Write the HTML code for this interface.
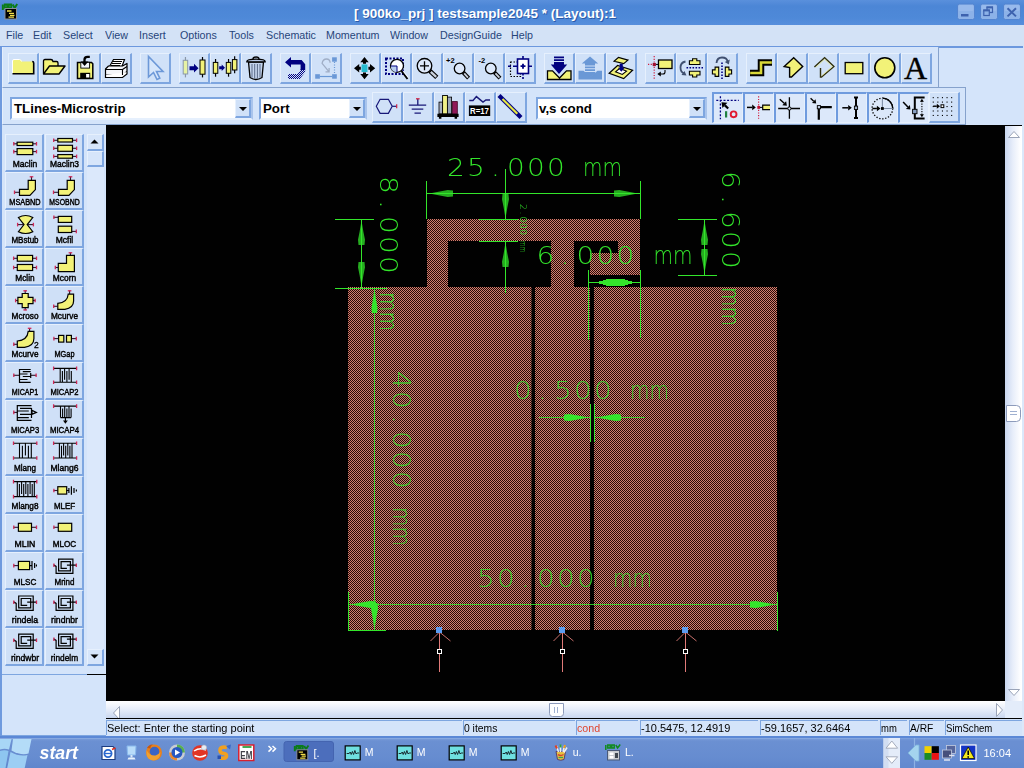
<!DOCTYPE html>
<html><head><meta charset="utf-8"><title>900ko_prj testsample2045 (Layout):1</title>
<style>
html,body{margin:0;padding:0;}
body{width:1024px;height:768px;overflow:hidden;position:relative;background:#d4e4fa;font-family:"Liberation Sans",sans-serif;font-size:11px;color:#000;}
.abs{position:absolute;}
#title{left:0;top:0;width:1024px;height:25px;background:linear-gradient(#5a90dc 0,#4c86d6 6px,#4e89d8 18px,#578edc 25px);}
#title .t{left:353px;top:6px;width:264px;text-align:center;white-space:nowrap;color:#fff;font-weight:bold;font-size:13.5px;line-height:16px;text-shadow:1px 1px 0 #2b5aa8;}
#menu{left:0;top:25px;width:1024px;height:21px;background:#d3e2f6;}
#menu span{position:absolute;top:3px;transform:scaleX(0.93);transform-origin:0 0;font-size:11.5px;line-height:14px;color:#27457a;white-space:nowrap;}
.tb{position:absolute;border:1px solid #86a2cc;border-left-color:#e4eefc;background:#d4e4fa;box-sizing:border-box;}
.btn{position:absolute;width:31px;height:31px;box-sizing:border-box;border-top:1px solid #e6f0fd;border-left:1px solid #e6f0fd;border-right:2px solid #7ea6e0;border-bottom:2px solid #7ea6e0;background:#d0e1f8;}
.btn svg{position:absolute;left:-1px;top:-1px;overflow:visible;}
.btn.dn{border-top:2px solid #6f9bde;border-left:2px solid #6f9bde;border-right:1px solid #e6f0fd;border-bottom:1px solid #e6f0fd;background:#dce8fa;}
.btn.dn svg{left:-2px;top:-2px;}
.combo{position:absolute;height:23px;box-sizing:border-box;background:#fff;border:2px solid #7ea6e0;border-right-color:#a9c4ec;border-bottom-color:#e6f0fd;}
.combo .tx{position:absolute;left:2px;top:1px;font-weight:bold;font-size:13.3px;line-height:17px;white-space:nowrap;}
.combo .ar{position:absolute;right:0;top:0;width:16px;height:19px;background:#d0e1f8;box-sizing:border-box;border-top:1px solid #e6f0fd;border-left:1px solid #e6f0fd;border-right:2px solid #7ea6e0;border-bottom:2px solid #7ea6e0;}
.combo .ar:after{content:"";position:absolute;left:3px;top:7px;border:4px solid transparent;border-top:4px solid #000;border-bottom:0;}
.pb{position:absolute;width:39px;height:38px;box-sizing:border-box;border-top:1px solid #e6f0fd;border-left:1px solid #e6f0fd;border-right:2px solid #7ea6e0;border-bottom:2px solid #7ea6e0;background:#cfe0f7;}
.pb .l{position:absolute;left:-4px;width:44px;top:23px;text-align:center;font-size:10px;line-height:12px;white-space:nowrap;letter-spacing:0.2px;}
.pb svg{position:absolute;left:-1px;top:-1px;overflow:visible;}
.pb.c0 svg{left:0;}
.sf{position:absolute;top:720px;height:15px;box-sizing:border-box;border-left:1px solid #7ea6e0;border-top:1px solid #7ea6e0;font-size:11px;line-height:14px;white-space:nowrap;padding-left:0px;overflow:hidden;}
#task{left:0;top:738px;width:1024px;height:30px;background:linear-gradient(#7ea0dc 0,#6b90d2 3px,#668cd0 20px,#5f86cc 30px);}
#task .tt{position:absolute;top:8px;color:#fff;font-size:11px;line-height:14px;}
</style></head>
<body>
<div id="root" style="position:absolute;left:0;top:0;width:1024px;height:768px;overflow:hidden;will-change:opacity;opacity:0.9999">
<div id="title" class="abs"><div class="abs t">[ 900ko_prj ] testsample2045 * (Layout):1</div><svg class="abs" style="left:0;top:0" width="1024" height="25"><g transform="translate(2,4) scale(1.0)"><path d="M0.800 0.500V6M2.800 0.500h2.400v3.500h-2.400zM6.800 0.500h2.400v3.500h-2.400zM10.800 0.500l1.800 3.500 2.600-4" fill="none" stroke="#0b7c18" stroke-width="1.900"/><rect x="3" y="4.500" width="11.500" height="10.500" fill="#000" stroke="#8a9098" stroke-width="1"/><path d="M5 7h4.500M7 9.300h5M8 11.300h4.500M6.500 13.200h5.500" stroke="#f4e04a" stroke-width="1.300"/></g><rect x="957.5" y="4" width="17" height="15.500" rx="2" fill="#8cb2e8" stroke="#5384d0" stroke-width="1"/><rect x="958.5" y="5" width="15" height="6" rx="1.500" fill="#a0c0ee" opacity="0.6"/><rect x="980.5" y="4" width="17" height="15.500" rx="2" fill="#8cb2e8" stroke="#5384d0" stroke-width="1"/><rect x="981.5" y="5" width="15" height="6" rx="1.500" fill="#a0c0ee" opacity="0.6"/><rect x="1003.5" y="4" width="17" height="15.500" rx="2" fill="#8cb2e8" stroke="#5384d0" stroke-width="1"/><rect x="1004.5" y="5" width="15" height="6" rx="1.500" fill="#a0c0ee" opacity="0.6"/><rect x="961" y="14" width="7.500" height="2.500" fill="#3d62ae"/><rect x="987" y="7" width="5.500" height="5.500" fill="none" stroke="#3d62ae" stroke-width="1.200"/><path d="M986.500 7.500h6.500" stroke="#3d62ae" stroke-width="1.800"/><rect x="983.800" y="10" width="5.500" height="5.500" fill="#8cb2e8" stroke="#3d62ae" stroke-width="1.200"/><path d="M983.300 10.500h6.500" stroke="#3d62ae" stroke-width="1.800"/><path d="M1007.500 8.200l8.500 8.200M1016 8.200l-8.500 8.200" stroke="#3d62ae" stroke-width="2"/></svg></div>
<div id="menu" class="abs"><span style="left:6px">File</span><span style="left:33.4px">Edit</span><span style="left:63.4px">Select</span><span style="left:104.7px">View</span><span style="left:139px">Insert</span><span style="left:179.7px">Options</span><span style="left:229px">Tools</span><span style="left:265.6px">Schematic</span><span style="left:325.7px">Momentum</span><span style="left:390px">Window</span><span style="left:439.8px">DesignGuide</span><span style="left:510.9px">Help</span></div>
<div class="abs" style="left:0;top:46px;width:2px;height:692px;background:#6f9ade"></div>
<div class="abs" style="left:0;top:46px;width:1023px;height:2px;background:#6c98de"></div><div class="tb" style="left:2px;top:47px;width:937px;height:41px;border-top:0"></div>
<div class="tb" style="left:2px;top:87px;width:964px;height:38px"></div>
<div class="btn" style="left:8px;top:53px"><svg width="30" height="30" viewBox="0 0 30 30"><path d="M4.500 8.5q0-2 2-2h5q2 0 2.500 2h10q1.500 0 1.500 1.500v10.500h-21z" fill="#f2f278"/><path d="M4.500 20.500V8q0-1.500 1.500-1.500h5.500q1.500 0 2 2" fill="none" stroke="#fff" stroke-width="1"/><path d="M4.500 20.800h21.200V10q0-1.500-1.500-1.500" fill="none" stroke="#000" stroke-width="1.600"/></svg></div><div class="btn" style="left:39px;top:53px"><svg width="30" height="30" viewBox="0 0 30 30"><path d="M4.500 20.500V8q0-1.500 1.500-1.500h6q1.500 0 2 2h3.500q1.500 0 1.500 1.500v3" fill="#f2f278" stroke="#000" stroke-width="1.300"/><path d="M4.500 21l6-8h15.500l-6 8z" fill="#f2f278" stroke="#000" stroke-width="1.400" stroke-linejoin="round"/></svg></div><div class="btn" style="left:70px;top:53px"><svg width="30" height="30" viewBox="0 0 30 30"><path d="M7.500 9.500h14l1.300 1.300v14.600h-15.300z" fill="#f2f278" stroke="#000" stroke-width="1.500"/><rect x="10.800" y="9.300" width="8.800" height="5.800" fill="#f4f6fa" stroke="#000" stroke-width="0.900"/><rect x="10.200" y="19.800" width="10" height="5.600" fill="#000"/><rect x="16.100" y="21" width="3.200" height="3.500" fill="#fff"/><path d="M19.800 3.800h-2.300q-3 0-3 3v3" fill="none" stroke="#000" stroke-width="2.300"/><path d="M10.800 8.400h7.600l-3.800 4.600z" fill="#000"/></svg></div><div class="btn" style="left:101px;top:53px"><svg width="30" height="30" viewBox="0 0 30 30"><path d="M8.500 13.500l4-7h11l-2.500 7z" fill="#fff" stroke="#000" stroke-width="1.200"/><path d="M12 8.500h9M11 10.500h9M10 12.500h9" stroke="#000" stroke-width="1"/><path d="M4.500 16l3-3h14l4.500-2.500v8l-4.500 3.500h-17z" fill="#f4f6fa" stroke="#000" stroke-width="1.200" stroke-linejoin="round"/><path d="M4.500 22v2.500h17l4.500-3.500v-2" fill="#fff" stroke="#000" stroke-width="1.200"/><path d="M4.500 16.500h17v5.500M21.500 16.500l4.500-3" fill="none" stroke="#000" stroke-width="1.100"/></svg></div><div class="btn" style="left:140px;top:53px"><svg width="30" height="30" viewBox="0 0 30 30"><path d="M8.500 3.500v20.500l5-4.500 3.500 7 2.800-1.300-3.300-6.700h6.500z" fill="#d6e6fb" stroke="#6c98d8" stroke-width="1.600" stroke-linejoin="miter"/></svg></div><div class="btn" style="left:179px;top:53px"><svg width="30" height="30" viewBox="0 0 30 30"><path d="M6.45 4V24.4" stroke="#8a98a8" stroke-width="1.2"/><rect x="4.2" y="7.3" width="4.5" height="13.7" fill="#e6f2a4" stroke="#8a98a8" stroke-width="1"/><path d="M10.500 13.200h4.500v-2.400l4.500 4.400-4.500 4.400v-2.400h-4.500z" fill="#000080"/><path d="M23.5 4V24.4" stroke="#000" stroke-width="1.2"/><rect x="21" y="7" width="5" height="14.2" fill="#f2f278" stroke="#000" stroke-width="1"/></svg></div><div class="btn" style="left:210px;top:53px"><svg width="30" height="30" viewBox="0 0 30 30"><path d="M5.55 6V23.7" stroke="#000" stroke-width="1.2"/><rect x="3.3" y="9.4" width="4.5" height="10.9" fill="#f2f278" stroke="#000" stroke-width="1"/><path d="M9.200 13.300h2.500v-1.800l3.300 3.300-3.300 3.300v-1.800h-2.500z" fill="#000080"/><path d="M18.55 6V23.7" stroke="#000" stroke-width="1.2"/><rect x="16.3" y="9.4" width="4.5" height="10.9" fill="#f2f278" stroke="#000" stroke-width="1"/><path d="M24.65 3.2V20.3" stroke="#000" stroke-width="1.2"/><rect x="22.4" y="6.6" width="4.5" height="10.4" fill="#f2f278" stroke="#000" stroke-width="1"/></svg></div><div class="btn" style="left:241px;top:53px"><svg width="30" height="30" viewBox="0 0 30 30"><path d="M7.500 9l1.500 15.500q3 2 6 2t6-2l1.500-15.500z" fill="#c4d4ec" stroke="#000" stroke-width="1.300"/><path d="M11 11v13.500M13.700 11v14.500M16.400 11v14.500M19 11v13.500" stroke="#5a6a88" stroke-width="1"/><path d="M12 6q0-2 3-2t3 2" fill="none" stroke="#000" stroke-width="1.300"/><path d="M5.800 8.800q0-2.600 9.200-2.600t9.200 2.600z" fill="#b8c8e4" stroke="#000" stroke-width="1.300"/></svg></div><div class="btn" style="left:280px;top:53px"><svg width="30" height="30" viewBox="0 0 30 30"><defs><pattern id="dz" width="2" height="2" patternUnits="userSpaceOnUse"><rect width="1" height="1" fill="#000080"/><rect x="1" y="1" width="1" height="1" fill="#000080"/></pattern></defs><path d="M8 21h9.500l3.100-3.500v-1.500h4.600v3l-5.500 7h-11.700z" fill="url(#dz)"/><path d="M5 9.300l6-5.300v3h10.600l3.600 4.300v5.700h-4.600v-5.400h-9.600v3z" fill="#000080"/></svg></div><div class="btn" style="left:311px;top:53px"><svg width="30" height="30" viewBox="0 0 30 30"><rect x="21.100" y="4.300" width="4.700" height="4.400" fill="#6a98d6"/><rect x="4.200" y="21.200" width="4.700" height="4.500" fill="#6a98d6"/><rect x="21.100" y="21.200" width="4.700" height="4.500" fill="#6a98d6"/><path d="M9 23.500h12" stroke="#6a98d6" stroke-width="1.200"/><path d="M23.500 9v12" stroke="#6a98d6" stroke-width="1.200" stroke-dasharray="1 1.500"/><path d="M19.100 9.800q0-3.800-3.600-3.800t-4.400 4.300l7 8.600M14.500 18.900h3.600v-4" fill="none" stroke="#a0aec6" stroke-width="1.300"/></svg></div><div class="btn" style="left:350px;top:53px"><svg width="30" height="30" viewBox="0 0 30 30"><rect x="11.500" y="11.400" width="6" height="7.600" fill="#28bcd0"/><path d="M14.500 4l4.200 5.200h-2.700v1.600h-3v-1.600h-2.700zM14.500 26.200l4.200-5.200h-2.700v-1.600h-3v1.600h-2.700zM4 15.200l5.200-4.200v2.700h1.600v3h-1.600v2.700zM25.200 15.200l-5.200-4.200v2.700h-1.600v3h1.600v2.700z" fill="#000"/></svg></div><div class="btn" style="left:381px;top:53px"><svg width="30" height="30" viewBox="0 0 30 30"><rect x="5" y="5.600" width="17" height="15.500" fill="none" stroke="#000080" stroke-width="2" stroke-dasharray="2 1.500"/><path d="M20.500 18l6 8" stroke="#000" stroke-width="1.800"/><path d="M21.800 17.500l5.500 7" stroke="#fff" stroke-width="0.800"/><circle cx="16" cy="12.800" r="6.500" fill="#fff" stroke="#000" stroke-width="1.300"/><path d="M9.800 13h6.200v6q-6 0-6.200-6z" fill="#b8cdf0"/><path d="M9.800 13h6.200v6" fill="none" stroke="#000080" stroke-width="1"/></svg></div><div class="btn" style="left:412px;top:53px"><svg width="30" height="30" viewBox="0 0 30 30"><path d="M17.8 17.8L24.8 24.4" stroke="#000" stroke-width="4.6" stroke-linecap="butt"/><path d="M18.8 18.8L24.2 23.799999999999997" stroke="#c8d0dc" stroke-width="2.4000000000000004"/><circle cx="12.5" cy="12.8" r="7.3" fill="#dde9fb" stroke="#000" stroke-width="1.3"/><path d="M8 12.800h9M12.500 8.300v9" stroke="#000" stroke-width="1.300"/></svg></div><div class="btn" style="left:443px;top:53px"><svg width="30" height="30" viewBox="0 0 30 30"><path d="M20.2 19.4L25.6 25.2" stroke="#000" stroke-width="4.0" stroke-linecap="butt"/><path d="M21.2 20.4L25.0 24.599999999999998" stroke="#c8d0dc" stroke-width="1.8"/><circle cx="16.6" cy="15.5" r="5.3" fill="#dde9fb" stroke="#000" stroke-width="1.3"/><text x="3" y="9.800" font-family="'Liberation Sans',sans-serif" font-weight="bold" font-size="7.500" fill="#000">+2</text></svg></div><div class="btn" style="left:474px;top:53px"><svg width="30" height="30" viewBox="0 0 30 30"><path d="M20.4 19.3L26 25.2" stroke="#000" stroke-width="4.0" stroke-linecap="butt"/><path d="M21.4 20.3L25.4 24.599999999999998" stroke="#c8d0dc" stroke-width="1.8"/><circle cx="16.8" cy="15.5" r="5.3" fill="#dde9fb" stroke="#000" stroke-width="1.3"/><text x="4.500" y="9.800" font-family="'Liberation Sans',sans-serif" font-weight="bold" font-size="7.500" fill="#000">-2</text></svg></div><div class="btn" style="left:505px;top:53px"><svg width="30" height="30" viewBox="0 0 30 30"><rect x="5.500" y="9" width="10" height="14.500" fill="none" stroke="#000" stroke-width="1.200" stroke-dasharray="1.500 1.500"/><rect x="12.500" y="6" width="11" height="14.500" fill="#fff" stroke="#000080" stroke-width="1.600"/><path d="M15.500 13.200h5M18 10.700v5" stroke="#000080" stroke-width="1.800"/><path d="M18 3v3M18 20.500v2M18 24v2M3 13.200h3M8 13.200h4.500M23.500 13.200h3.500" stroke="#000080" stroke-width="1.600"/></svg></div><div class="btn" style="left:544px;top:53px"><svg width="30" height="30" viewBox="0 0 30 30"><path d="M3.500 17.800h5l7 7.200 7-7.200h4.500v8.700h-23.500z" fill="#f2f278" stroke="#000" stroke-width="1.300"/><path d="M10 3.500h10v1.800h-10zM10 6.300h10v1.800h-10zM10 9h10v2.500h3.200l-8.200 9.500-8.200-9.500h3.200z" fill="#000080"/></svg></div><div class="btn" style="left:575px;top:53px"><svg width="30" height="30" viewBox="0 0 30 30"><path d="M3.500 17.800h5l7 6 7-6h4.500v8.700h-23.500z" fill="#6a98d6"/><path d="M15 3.500l8.200 7h-3.200v2h-10v-2h-3.200zM10 13.500h10v1.800h-10zM10 16.300h10v1.800h-10zM10 19h10v2l-5 3.500-5-3.500z" fill="#6a98d6"/></svg></div><div class="btn" style="left:606px;top:53px"><svg width="30" height="30" viewBox="0 0 30 30"><path d="M3.200 20.200L11.600 12.500L26.600 17.200L17.700 25.600Z" fill="#f2f278" stroke="#000" stroke-width="1.200"/><path d="M9.500 18.800L13.500 15.500L20.500 18.100L16.300 21.400Z" fill="#fff" stroke="#000" stroke-width="1.100"/><path d="M8.100 8.250L12.500 4.300L21.900 7.100L17.700 10.600Z" fill="#f2f278" stroke="#000" stroke-width="1.200"/><path d="M13.700 10.800h3.100v4h1.800l-3.300 4-3.300-4h1.700z" fill="#000080"/></svg></div><div class="btn" style="left:645px;top:53px"><svg width="30" height="30" viewBox="0 0 30 30"><path d="M9.200 3v23.500M3 11.400h6" stroke="#d02040" stroke-width="1.200" stroke-dasharray="1.200 1.500"/><rect x="7.700" y="9.900" width="3.200" height="3.200" fill="#a01030"/><path d="M11 11.400h2.500" stroke="#000"/><rect x="13.500" y="7" width="13.500" height="8.500" fill="#f2f278" stroke="#000" stroke-width="1.300"/><path d="M20 17v2q0 2-2 2h-4" fill="none" stroke="#000" stroke-width="1.100"/><path d="M12.300 21l3.500-2.500v5z" fill="#000"/></svg></div><div class="btn" style="left:676px;top:53px"><svg width="30" height="30" viewBox="0 0 30 30"><path d="M10.500 14.800h16.500" stroke="#000080" stroke-width="1.600" stroke-dasharray="1.600 1.400"/><path d="M16.600 5.700h4.200v2h3.200v3.800h-10.600v-3.800h3.200zM16.600 24h4.200v-2h3.200v-3.800h-10.600v3.800h3.200z" fill="#f2f278" stroke="#000" stroke-width="1.100"/><path d="M9.500 8.500q-5 1-5 6t4 6" fill="none" stroke="#405070" stroke-width="1.800"/><path d="M10.500 22.500l-5-0.500 3-4z" fill="#405070"/></svg></div><div class="btn" style="left:707px;top:53px"><svg width="30" height="30" viewBox="0 0 30 30"><path d="M15 9.500v17" stroke="#000080" stroke-width="1.600" stroke-dasharray="1.600 1.400"/><path d="M5.400 16.900h2.700v-2.800h3.600v9.300h-3.600v-2.400h-2.700zM24.600 16.900h-2.700v-2.800h-3.600v9.300h3.600v-2.400h2.700z" fill="#f2f278" stroke="#000" stroke-width="1.100"/><path d="M9.500 10q0.500-5.500 5.500-5.500t5.500 4" fill="none" stroke="#405070" stroke-width="1.800"/><path d="M22.800 6.500l-1 5-4-2.500z" fill="#405070"/></svg></div><div class="btn" style="left:746px;top:53px"><svg width="30" height="30" viewBox="0 0 30 30"><path d="M4 20h11v-10.500h11" fill="none" stroke="#000" stroke-width="6.500"/><path d="M5.500 20h9.500v-10.500h9.500" fill="none" stroke="#d8d838" stroke-width="2.600" stroke-linecap="square"/></svg></div><div class="btn" style="left:777px;top:53px"><svg width="30" height="30" viewBox="0 0 30 30"><path d="M16.700 4.800l9 8.700-11.200 10.500h-1.900v-9.500l-5.400-1z" fill="#f2f278" stroke="#000" stroke-width="1.400" stroke-linejoin="miter"/></svg></div><div class="btn" style="left:808px;top:53px"><svg width="30" height="30" viewBox="0 0 30 30"><path d="M6.400 14.100l10.200-9.300 9.300 8.700-12.400 10.500h-1v-9" fill="none" stroke="#303010" stroke-width="1.400"/><path d="M7.800 14.300l8.800-8 7.800 7.300-10.800 9.200" fill="none" stroke="#e8e890" stroke-width="0.800"/></svg></div><div class="btn" style="left:839px;top:53px"><svg width="30" height="30" viewBox="0 0 30 30"><rect x="6.200" y="9.500" width="17.600" height="11.200" fill="#f2f278" stroke="#000" stroke-width="1.300"/></svg></div><div class="btn" style="left:870px;top:53px"><svg width="30" height="30" viewBox="0 0 30 30"><circle cx="14.800" cy="14.800" r="10" fill="#f2f278" stroke="#000" stroke-width="1.600"/></svg></div><div class="btn" style="left:901px;top:53px"><svg width="30" height="30" viewBox="0 0 30 30"><text x="14.500" y="25.800" text-anchor="middle" font-family="'Liberation Serif',serif" font-size="32" fill="#000" stroke="#000" stroke-width="0.400">A</text></svg></div>
<div class="btn" style="left:372px;top:92px"><svg width="30" height="30" viewBox="0 0 30 30"><path d="M4.300 14.300l3.800-7h8.300l3.800 7-3.800 7h-8.300z" fill="none" stroke="#181878" stroke-width="1.200"/><path d="M20.200 14.300h4.500" stroke="#181878" stroke-width="1.200"/><path d="M24.700 12.300v4" stroke="#d02040" stroke-width="1.200"/></svg></div><div class="btn" style="left:403px;top:92px"><svg width="30" height="30" viewBox="0 0 30 30"><path d="M14.800 7v6M5.800 13.100h17.400M8.700 17.200h11.600M11.500 21.200h6.400" stroke="#181878" stroke-width="1.300"/><path d="M13 6.800h3.600" stroke="#d02040" stroke-width="1.300"/></svg></div><div class="btn" style="left:434px;top:92px"><svg width="30" height="30" viewBox="0 0 30 30"><rect x="5" y="10.100" width="3.600" height="11.800" fill="#a8b0c0" stroke="#000" stroke-width="0.800"/><rect x="8.600" y="3.500" width="4.800" height="18.400" fill="#f0f088" stroke="#000" stroke-width="0.900"/><rect x="13.400" y="5.100" width="4.200" height="16.800" fill="#98a4b8" stroke="#000" stroke-width="0.800"/><rect x="18.300" y="9.600" width="5" height="12.300" fill="#901858" stroke="#400020" stroke-width="0.800"/><path d="M3.400 21.700h21.200v3.300h-1.500v1.700h-2.500v-1.700h-13.200v1.700h-2.500v-1.700h-1.500z" fill="#000"/></svg></div><div class="btn" style="left:465px;top:92px"><svg width="30" height="30" viewBox="0 0 30 30"><rect x="3.900" y="13.400" width="21.300" height="10.600" fill="#000"/><text x="14.500" y="22.400" text-anchor="middle" font-family="'Liberation Sans',sans-serif" font-weight="bold" font-size="9.500" fill="#fff" textLength="19" lengthAdjust="spacingAndGlyphs">R=17</text><path d="M4.300 8.500h3.700l3.400-3.900 6.600 5.500 2.900-2.100h4.100" fill="none" stroke="#181878" stroke-width="1.400"/></svg></div><div class="btn" style="left:496px;top:92px"><svg width="30" height="30" viewBox="0 0 30 30"><path d="M4.500 5l19 19" stroke="#000080" stroke-width="4.200" stroke-linecap="square"/><path d="M6.500 7l14.800 14.800" stroke="#e8e840" stroke-width="2.200"/></svg></div><div class="btn dn" style="left:712px;top:92px"><svg width="30" height="30" viewBox="0 0 30 30"><path d="M4.300 8.300h22.500M8.400 4.200v23" stroke="#000080" stroke-width="1.300" stroke-dasharray="2 1.600"/><path d="M16.2 16.5L12.9 13.4" stroke="#000" stroke-width="2.2"/><path d="M9.5 10.2L15.4 10.8L10.4 16.0Z" fill="#000"/><rect x="13" y="19.200" width="2.200" height="6.300" fill="#208040"/><circle cx="21.600" cy="22.300" r="2.900" fill="none" stroke="#e01830" stroke-width="1.900"/></svg></div><div class="btn dn" style="left:743px;top:92px"><svg width="30" height="30" viewBox="0 0 30 30"><path d="M15.600 4.200v22.600" stroke="#d02040" stroke-width="1.200" stroke-dasharray="1.200 1.500"/><path d="M4 15.4L9.2 15.4" stroke="#000" stroke-width="1.5"/><path d="M12.8 15.4L9.2 18.2L9.2 12.6Z" fill="#000"/><rect x="14.300" y="14" width="2.800" height="2.800" fill="#c01030"/><path d="M17 15.400h3" stroke="#000"/><path d="M27 13.100h-7.300v4.500h7.300" fill="#f2f278" stroke="#000" stroke-width="1.200"/></svg></div><div class="btn dn" style="left:774px;top:92px"><svg width="30" height="30" viewBox="0 0 30 30"><path d="M15.400 5.300v21.500M4.200 16.500h21.800" stroke="#000" stroke-width="1.300"/><circle cx="15.400" cy="16.500" r="1.600" fill="#d6e4fa" stroke="#000"/><path d="M5.8 7.2L10.2 11.2" stroke="#000" stroke-width="1.4"/><path d="M12.9 13.7L8.3 13.3L12.1 9.2Z" fill="#000"/></svg></div><div class="btn dn" style="left:805px;top:92px"><svg width="30" height="30" viewBox="0 0 30 30"><path d="M13.800 27.700v-12.600h13" fill="none" stroke="#000" stroke-width="2.200"/><rect x="12.300" y="13.600" width="3.200" height="3.200" fill="#c0cce0" stroke="#000" stroke-width="0.900"/><path d="M5.6 6.3L8.7 9.2" stroke="#000" stroke-width="1.4"/><path d="M11.2 11.5L7.0 11.1L10.5 7.3Z" fill="#000"/></svg></div><div class="btn dn" style="left:836px;top:92px"><svg width="30" height="30" viewBox="0 0 30 30"><path d="M20 5.600v20.400M18 5.600h4M18 26h4" stroke="#000" stroke-width="2"/><rect x="18.400" y="14.100" width="3.200" height="3.400" fill="#a0b0c8" stroke="#000" stroke-width="0.900"/><path d="M6.3 15.8L12.2 15.8" stroke="#000" stroke-width="1.5"/><path d="M15.8 15.8L12.2 18.6L12.2 13.0Z" fill="#000"/></svg></div><div class="btn dn" style="left:867px;top:92px"><svg width="30" height="30" viewBox="0 0 30 30"><circle cx="15.400" cy="16.500" r="10.300" fill="none" stroke="#000" stroke-width="1.300" stroke-dasharray="1.300 1.700"/><path d="M15.400 6.200a10.300 10.300 0 0 1 10.300 10.300" fill="none" stroke="#000" stroke-width="1.300"/><path d="M15.400 6.200v10.300h10.300" fill="none" stroke="#8090a8" stroke-width="1.100"/><rect x="14" y="15.100" width="2.800" height="2.800" fill="#000"/><path d="M5.4 16.5L9.9 16.5" stroke="#000" stroke-width="1.5"/><path d="M13.5 16.5L9.9 19.3L9.9 13.7Z" fill="#000"/></svg></div><div class="btn dn" style="left:898px;top:92px"><svg width="30" height="30" viewBox="0 0 30 30"><path d="M26.600 5.600h-9.800v20.800h9.800" fill="none" stroke="#000" stroke-width="2"/><rect x="14.600" y="17.300" width="4.400" height="4.400" fill="#88a0c4" stroke="#000" stroke-width="0.900"/><path d="M23.900 9v14" stroke="#000" stroke-width="1.100" stroke-dasharray="1.200 1.300"/><path d="M23.900 6.800l2 3h-4zM23.900 25.200l2-3h-4z" fill="#000"/><path d="M5.1 10L9.9 15.0" stroke="#000" stroke-width="1.5"/><path d="M12.4 17.6L7.9 16.9L11.9 13.0Z" fill="#000"/></svg></div><div class="btn" style="left:929px;top:92px"><svg width="30" height="30" viewBox="0 0 30 30"><rect x="3.7" y="5.1" width="1.100" height="1.100" fill="#000"/><rect x="8.3" y="5.1" width="1.100" height="1.100" fill="#000"/><rect x="12.9" y="5.1" width="1.100" height="1.100" fill="#000"/><rect x="17.5" y="5.1" width="1.100" height="1.100" fill="#000"/><rect x="22.1" y="5.1" width="1.100" height="1.100" fill="#000"/><rect x="3.7" y="9.55" width="1.100" height="1.100" fill="#000"/><rect x="8.3" y="9.55" width="1.100" height="1.100" fill="#000"/><rect x="12.9" y="9.55" width="1.100" height="1.100" fill="#000"/><rect x="17.5" y="9.55" width="1.100" height="1.100" fill="#000"/><rect x="22.1" y="9.55" width="1.100" height="1.100" fill="#000"/><rect x="3.7" y="14" width="1.100" height="1.100" fill="#000"/><rect x="8.3" y="14" width="1.100" height="1.100" fill="#000"/><rect x="12.9" y="14" width="1.100" height="1.100" fill="#000"/><rect x="17.5" y="14" width="1.100" height="1.100" fill="#000"/><rect x="22.1" y="14" width="1.100" height="1.100" fill="#000"/><rect x="3.7" y="18.45" width="1.100" height="1.100" fill="#000"/><rect x="8.3" y="18.45" width="1.100" height="1.100" fill="#000"/><rect x="12.9" y="18.45" width="1.100" height="1.100" fill="#000"/><rect x="17.5" y="18.45" width="1.100" height="1.100" fill="#000"/><rect x="22.1" y="18.45" width="1.100" height="1.100" fill="#000"/><rect x="3.7" y="22.9" width="1.100" height="1.100" fill="#000"/><rect x="8.3" y="22.9" width="1.100" height="1.100" fill="#000"/><rect x="12.9" y="22.9" width="1.100" height="1.100" fill="#000"/><rect x="17.5" y="22.9" width="1.100" height="1.100" fill="#000"/><rect x="22.1" y="22.9" width="1.100" height="1.100" fill="#000"/><path d="M4.2 14.2L7.8 14.2" stroke="#000" stroke-width="1.4"/><path d="M11 14.2L7.8 16.7L7.8 11.7Z" fill="#000"/><rect x="12" y="12.800" width="2.800" height="2.800" fill="#fff" stroke="#000" stroke-width="1"/></svg></div>
<div class="combo" style="left:10px;top:97px;width:243px"><div class="tx">TLines-Microstrip</div><div class="ar"></div></div><div class="combo" style="left:259px;top:97px;width:108px"><div class="tx">Port</div><div class="ar"></div></div><div class="combo" style="left:536px;top:97px;width:171px"><div class="tx" style="left:1px">v,s cond</div><div class="ar"></div></div>
<div class="abs" style="left:2px;top:125px;width:104px;height:550px;border-bottom:1px solid #7ea6e0;box-sizing:border-box"></div><div class="pb c0" style="left:5px;top:134px"><svg width="38" height="38" viewBox="0 0 38 38"><path d="M7.5 9.8H11.1" stroke="#301828" stroke-width="1.1"/><path d="M7.8 8V11.6" stroke="#d02858" stroke-width="1.3"/><path d="M26.8 9.8H30.8" stroke="#301828" stroke-width="1.1"/><path d="M30.5 8V11.6" stroke="#d02858" stroke-width="1.3"/><path d="M7.5 17.6H11.1" stroke="#301828" stroke-width="1.1"/><path d="M7.8 15.8V19.4" stroke="#d02858" stroke-width="1.3"/><path d="M26.8 17.6H30.8" stroke="#301828" stroke-width="1.1"/><path d="M30.5 15.8V19.4" stroke="#d02858" stroke-width="1.3"/><rect x="11.1" y="8.2" width="15.7" height="3.3" fill="#f2f278" stroke="#000" stroke-width="1.2"/><rect x="11.1" y="14.6" width="15.7" height="6" fill="#f2f278" stroke="#000" stroke-width="1.2"/><text x="6.75" y="32.600" font-family="'Liberation Sans',sans-serif" font-size="9.400" stroke="#000" stroke-width="0.450" fill="#000" textLength="24.5" lengthAdjust="spacingAndGlyphs">Maclin</text></svg></div><div class="pb" style="left:45px;top:134px"><svg width="38" height="38" viewBox="0 0 38 38"><path d="M8.4 6.3H12.8" stroke="#301828" stroke-width="1.1"/><path d="M8.7 4.5V8.1" stroke="#d02858" stroke-width="1.3"/><path d="M27.5 6.3H31.9" stroke="#301828" stroke-width="1.1"/><path d="M31.6 4.5V8.1" stroke="#d02858" stroke-width="1.3"/><path d="M8.4 14.3H12.8" stroke="#301828" stroke-width="1.1"/><path d="M8.7 12.5V16.1" stroke="#d02858" stroke-width="1.3"/><path d="M27.5 14.3H31.9" stroke="#301828" stroke-width="1.1"/><path d="M31.6 12.5V16.1" stroke="#d02858" stroke-width="1.3"/><path d="M8.4 22.4H12.8" stroke="#301828" stroke-width="1.1"/><path d="M8.7 20.6V24.2" stroke="#d02858" stroke-width="1.3"/><path d="M27.5 22.4H31.9" stroke="#301828" stroke-width="1.1"/><path d="M31.6 20.6V24.2" stroke="#d02858" stroke-width="1.3"/><rect x="12.8" y="4.5" width="14.7" height="3.5" fill="#f2f278" stroke="#000" stroke-width="1.2"/><rect x="12.8" y="11.3" width="14.7" height="6" fill="#f2f278" stroke="#000" stroke-width="1.2"/><rect x="12.8" y="20.6" width="14.7" height="3.6" fill="#f2f278" stroke="#000" stroke-width="1.2"/><text x="4.9" y="32.600" font-family="'Liberation Sans',sans-serif" font-size="9.400" stroke="#000" stroke-width="0.450" fill="#000" textLength="29.2" lengthAdjust="spacingAndGlyphs">Maclin3</text></svg></div><div class="pb c0" style="left:5px;top:172px"><svg width="38" height="38" viewBox="0 0 38 38"><path d="M8.2 20.3H13.5" stroke="#301828" stroke-width="1.1"/><path d="M8.5 18.5V22.1" stroke="#d02858" stroke-width="1.3"/><path d="M25.5 4.5V8.3" stroke="#301828" stroke-width="1.1"/><path d="M23.7 4.8H27.3" stroke="#d02858" stroke-width="1.3"/><path d="M13.500 17.400H22.200V8.300H29.400V17.600L23.900 23.400H13.500Z" fill="#f2f278" stroke="#000" stroke-width="1.2" stroke-linejoin="miter"/><text x="3.35" y="32.600" font-family="'Liberation Sans',sans-serif" font-size="9.400" stroke="#000" stroke-width="0.450" fill="#000" textLength="31.3" lengthAdjust="spacingAndGlyphs">MSABND</text></svg></div><div class="pb" style="left:45px;top:172px"><svg width="38" height="38" viewBox="0 0 38 38"><path d="M8.2 20.3H13.5" stroke="#301828" stroke-width="1.1"/><path d="M8.5 18.5V22.1" stroke="#d02858" stroke-width="1.3"/><path d="M25.5 4.5V8.3" stroke="#301828" stroke-width="1.1"/><path d="M23.7 4.8H27.3" stroke="#d02858" stroke-width="1.3"/><path d="M13.500 17.400H22.200V8.300H29.400V17.600L23.900 23.400H13.500Z" fill="#f2f278" stroke="#000" stroke-width="1.2" stroke-linejoin="miter"/><text x="4.35" y="32.600" font-family="'Liberation Sans',sans-serif" font-size="9.400" stroke="#000" stroke-width="0.450" fill="#000" textLength="30.3" lengthAdjust="spacingAndGlyphs">MSOBND</text></svg></div><div class="pb c0" style="left:5px;top:210px"><svg width="38" height="38" viewBox="0 0 38 38"><path d="M11.3 14.6H17.5" stroke="#301828" stroke-width="1.1"/><path d="M11.6 12.8V16.4" stroke="#d02858" stroke-width="1.3"/><path d="M21.7 14.6H27.7" stroke="#301828" stroke-width="1.1"/><path d="M27.4 12.8V16.4" stroke="#d02858" stroke-width="1.3"/><path d="M12.400 7.500Q19.600 3.500 26.800 7.500L21.200 14.600L26.800 21.700Q19.600 25.300 12.400 21.700L18 14.600Z" fill="#f2f278" stroke="#000" stroke-width="1.2" stroke-linejoin="miter"/><text x="5.4" y="32.600" font-family="'Liberation Sans',sans-serif" font-size="9.400" stroke="#000" stroke-width="0.450" fill="#000" textLength="27.2" lengthAdjust="spacingAndGlyphs">MBstub</text></svg></div><div class="pb" style="left:45px;top:210px"><svg width="38" height="38" viewBox="0 0 38 38"><path d="M8.6 7.3H13.3" stroke="#301828" stroke-width="1.1"/><path d="M8.9 5.5V9.1" stroke="#d02858" stroke-width="1.3"/><path d="M26.7 21.4H31.6" stroke="#301828" stroke-width="1.1"/><path d="M31.3 19.6V23.2" stroke="#d02858" stroke-width="1.3"/><rect x="13.3" y="6.4" width="13.4" height="6" fill="#f2f278" stroke="#000" stroke-width="1.2"/><rect x="13.3" y="16.2" width="13.4" height="6.3" fill="#f2f278" stroke="#000" stroke-width="1.2"/><text x="10.75" y="32.600" font-family="'Liberation Sans',sans-serif" font-size="9.400" stroke="#000" stroke-width="0.450" fill="#000" textLength="17.5" lengthAdjust="spacingAndGlyphs">Mcfil</text></svg></div><div class="pb c0" style="left:5px;top:248px"><svg width="38" height="38" viewBox="0 0 38 38"><path d="M7.3 10.3H11.3" stroke="#301828" stroke-width="1.1"/><path d="M7.6 8.5V12.1" stroke="#d02858" stroke-width="1.3"/><path d="M26.6 10.3H30.8" stroke="#301828" stroke-width="1.1"/><path d="M30.5 8.5V12.1" stroke="#d02858" stroke-width="1.3"/><path d="M7.3 19.5H11.3" stroke="#301828" stroke-width="1.1"/><path d="M7.6 17.7V21.3" stroke="#d02858" stroke-width="1.3"/><path d="M26.6 19.5H30.8" stroke="#301828" stroke-width="1.1"/><path d="M30.5 17.7V21.3" stroke="#d02858" stroke-width="1.3"/><rect x="11.3" y="7.4" width="15.3" height="5.8" fill="#f2f278" stroke="#000" stroke-width="1.2"/><rect x="11.3" y="16.5" width="15.3" height="6" fill="#f2f278" stroke="#000" stroke-width="1.2"/><text x="9.3" y="32.600" font-family="'Liberation Sans',sans-serif" font-size="9.400" stroke="#000" stroke-width="0.450" fill="#000" textLength="19.4" lengthAdjust="spacingAndGlyphs">Mclin</text></svg></div><div class="pb" style="left:45px;top:248px"><svg width="38" height="38" viewBox="0 0 38 38"><path d="M10 19.5H13.3" stroke="#301828" stroke-width="1.1"/><path d="M10.3 17.7V21.3" stroke="#d02858" stroke-width="1.3"/><path d="M25.4 4.5V7.4" stroke="#301828" stroke-width="1.1"/><path d="M23.6 4.8H27.2" stroke="#d02858" stroke-width="1.3"/><path d="M13.300 15.400H21.500V7.400H29.400V23.600H13.300Z" fill="#f2f278" stroke="#000" stroke-width="1.2" stroke-linejoin="miter"/><text x="7.85" y="32.600" font-family="'Liberation Sans',sans-serif" font-size="9.400" stroke="#000" stroke-width="0.450" fill="#000" textLength="23.3" lengthAdjust="spacingAndGlyphs">Mcorn</text></svg></div><div class="pb c0" style="left:5px;top:286px"><svg width="38" height="38" viewBox="0 0 38 38"><path d="M9.3 14.5H11.9" stroke="#301828" stroke-width="1.1"/><path d="M9.6 12.7V16.3" stroke="#d02858" stroke-width="1.3"/><path d="M27 14.5H29.4" stroke="#301828" stroke-width="1.1"/><path d="M29.1 12.7V16.3" stroke="#d02858" stroke-width="1.3"/><path d="M19.2 4.5V7.5" stroke="#301828" stroke-width="1.1"/><path d="M17.4 4.8H21" stroke="#d02858" stroke-width="1.3"/><path d="M19.2 21.7V24.2" stroke="#301828" stroke-width="1.1"/><path d="M17.4 23.9H21" stroke="#d02858" stroke-width="1.3"/><path d="M16.200 7.500H22.200V11.300H27V17.700H22.200V21.700H16.200V17.700H11.900V11.300H16.200Z" fill="#f2f278" stroke="#000" stroke-width="1.2" stroke-linejoin="miter"/><text x="5.55" y="32.600" font-family="'Liberation Sans',sans-serif" font-size="9.400" stroke="#000" stroke-width="0.450" fill="#000" textLength="26.9" lengthAdjust="spacingAndGlyphs">Mcroso</text></svg></div><div class="pb" style="left:45px;top:286px"><svg width="38" height="38" viewBox="0 0 38 38"><path d="M8.4 20.3H12.8" stroke="#301828" stroke-width="1.1"/><path d="M8.7 18.5V22.1" stroke="#d02858" stroke-width="1.3"/><path d="M24.6 4.5V8.2" stroke="#301828" stroke-width="1.1"/><path d="M22.8 4.8H26.4" stroke="#d02858" stroke-width="1.3"/><path d="M12.800 17.300V23.300H19.900Q28.600 22 28.600 15.100V8.200H23.200Q22.500 16.500 12.800 17.300Z" fill="#f2f278" stroke="#000" stroke-width="1.2" stroke-linejoin="miter"/><text x="6" y="32.600" font-family="'Liberation Sans',sans-serif" font-size="9.400" stroke="#000" stroke-width="0.450" fill="#000" textLength="27" lengthAdjust="spacingAndGlyphs">Mcurve</text></svg></div><div class="pb c0" style="left:5px;top:324px"><svg width="38" height="38" viewBox="0 0 38 38"><path d="M7.5 20.3H11.3" stroke="#301828" stroke-width="1.1"/><path d="M7.8 18.5V22.1" stroke="#d02858" stroke-width="1.3"/><path d="M23.6 4V7.4" stroke="#301828" stroke-width="1.1"/><path d="M21.8 4.3H25.4" stroke="#d02858" stroke-width="1.3"/><path d="M11.300 17V23.400H18.500Q27.900 22 27.900 14.500V7.400H22.200Q21.500 16 11.300 17Z" fill="#f2f278" stroke="#000" stroke-width="1.2" stroke-linejoin="miter"/><text x="28" y="23.600" font-family="'Liberation Sans',sans-serif" font-size="8.500" fill="#000" stroke="#000" stroke-width="0.300">2</text><text x="5.55" y="32.600" font-family="'Liberation Sans',sans-serif" font-size="9.400" stroke="#000" stroke-width="0.450" fill="#000" textLength="26.9" lengthAdjust="spacingAndGlyphs">Mcurve</text></svg></div><div class="pb" style="left:45px;top:324px"><svg width="38" height="38" viewBox="0 0 38 38"><path d="M8.6 14.6H13.6" stroke="#301828" stroke-width="1.1"/><path d="M8.9 12.8V16.4" stroke="#d02858" stroke-width="1.3"/><path d="M26.4 14.6H31.6" stroke="#301828" stroke-width="1.1"/><path d="M31.3 12.8V16.4" stroke="#d02858" stroke-width="1.3"/><rect x="13.6" y="11.4" width="5.2" height="6.7" fill="#f2f278" stroke="#000" stroke-width="1.2"/><rect x="21.5" y="11.4" width="4.9" height="6.7" fill="#f2f278" stroke="#000" stroke-width="1.2"/><text x="9.5" y="32.600" font-family="'Liberation Sans',sans-serif" font-size="9.400" stroke="#000" stroke-width="0.450" fill="#000" textLength="20" lengthAdjust="spacingAndGlyphs">MGap</text></svg></div><div class="pb c0" style="left:5px;top:362px"><svg width="38" height="38" viewBox="0 0 38 38"><path d="M7.5 13.3H13.5" stroke="#301828" stroke-width="1.1"/><path d="M7.8 11.5V15.1" stroke="#d02858" stroke-width="1.3"/><path d="M24.7 13.3H30.4" stroke="#301828" stroke-width="1.1"/><path d="M30.1 11.5V15.1" stroke="#d02858" stroke-width="1.3"/><path d="M24.700 7.500H13.500V20.300H24.700M24.700 11V16M16.800 9.700H24.700M13.500 12H21.500M16.800 14.500H24.700M13.500 17.500H21.500" fill="none" stroke="#000" stroke-width="1.2"/><text x="5.75" y="32.600" font-family="'Liberation Sans',sans-serif" font-size="9.400" stroke="#000" stroke-width="0.450" fill="#000" textLength="26.5" lengthAdjust="spacingAndGlyphs">MICAP1</text></svg></div><div class="pb" style="left:45px;top:362px"><svg width="38" height="38" viewBox="0 0 38 38"><path d="M8.6 6.4H31.6M8.6 20.3H31.6M15.2 6.4V20.3M17.4 8.9V20.3M19.6 6.4V17.8M21.9 8.9V20.3M24.1 6.4V17.8M26.3 8.9V20.3" fill="none" stroke="#000" stroke-width="1.1"/><path d="M8.6 4.6000000000000005v3.6M31.6 4.6000000000000005v3.6M8.6 18.5v3.6M31.6 18.5v3.6" stroke="#d02858" stroke-width="1.3"/><text x="5.45" y="32.600" font-family="'Liberation Sans',sans-serif" font-size="9.400" stroke="#000" stroke-width="0.450" fill="#000" textLength="28.1" lengthAdjust="spacingAndGlyphs">MICAP2</text></svg></div><div class="pb c0" style="left:5px;top:400px"><svg width="38" height="38" viewBox="0 0 38 38"><path d="M7.5 12.4H11.3" stroke="#301828" stroke-width="1.1"/><path d="M7.8 10.6V14.2" stroke="#d02858" stroke-width="1.3"/><path d="M25.500 5.600H11.300V20.300H25.500M25.500 8V18M14 8.300H25.500M11.300 11H22.800M14 14.300H25.500M11.300 17.600H22.800M26 10.400l4.400 2-4.400 2z" fill="none" stroke="#000" stroke-width="1.2"/><text x="4.9" y="32.600" font-family="'Liberation Sans',sans-serif" font-size="9.400" stroke="#000" stroke-width="0.450" fill="#000" textLength="28.2" lengthAdjust="spacingAndGlyphs">MICAP3</text></svg></div><div class="pb" style="left:45px;top:400px"><svg width="38" height="38" viewBox="0 0 38 38"><path d="M8.6 6.1H31.6M15.5 6.1V17.6M17.6 8.6V17.6M19.7 6.1V17.6M21.9 8.6V17.6M24.0 6.1V17.6M26.1 8.6V17.6" fill="none" stroke="#000" stroke-width="1.1"/><path d="M8.6 4.3v3.6M31.6 4.3v3.6" stroke="#d02858" stroke-width="1.3"/><path d="M20.400 17.600V21M15.500 17.600H26.100" fill="none" stroke="#000" stroke-width="1.1"/><path d="M18 20.600h4.800l-2.400 3.200z" fill="#000"/><text x="4.9" y="32.600" font-family="'Liberation Sans',sans-serif" font-size="9.400" stroke="#000" stroke-width="0.450" fill="#000" textLength="29.2" lengthAdjust="spacingAndGlyphs">MICAP4</text></svg></div><div class="pb c0" style="left:5px;top:438px"><svg width="38" height="38" viewBox="0 0 38 38"><path d="M7.5 5.3H30.8M7.5 20H30.8M13.5 5.3V20M16.4 7.8V20M19.4 5.3V17.5M22.4 7.8V20M25.3 5.3V20" fill="none" stroke="#000" stroke-width="1.1"/><path d="M7.5 3.5v3.6M30.8 3.5v3.6M7.5 18.2v3.6M30.8 18.2v3.6" stroke="#d02858" stroke-width="1.3"/><text x="7.95" y="32.600" font-family="'Liberation Sans',sans-serif" font-size="9.400" stroke="#000" stroke-width="0.450" fill="#000" textLength="22.1" lengthAdjust="spacingAndGlyphs">Mlang</text></svg></div><div class="pb" style="left:45px;top:438px"><svg width="38" height="38" viewBox="0 0 38 38"><path d="M8.6 5.3H31.6M8.6 20H31.6M14.4 5.3V20M16.5 7.8V20M18.6 5.3V17.5M20.7 7.8V20M22.8 5.3V17.5M24.9 7.8V20M27.0 5.3V20" fill="none" stroke="#000" stroke-width="1.1"/><path d="M8.6 3.5v3.6M31.6 3.5v3.6M8.6 18.2v3.6M31.6 18.2v3.6" stroke="#d02858" stroke-width="1.3"/><text x="5.45" y="32.600" font-family="'Liberation Sans',sans-serif" font-size="9.400" stroke="#000" stroke-width="0.450" fill="#000" textLength="28.1" lengthAdjust="spacingAndGlyphs">Mlang6</text></svg></div><div class="pb c0" style="left:5px;top:476px"><svg width="38" height="38" viewBox="0 0 38 38"><path d="M7.5 5.6H30.8M7.5 20.6H30.8M11.3 5.6V20.6M13.4 8.1V20.6M15.6 5.6V18.1M17.7 8.1V20.6M19.8 5.6V18.1M21.9 8.1V20.6M24.1 5.6V18.1M26.2 8.1V20.6M28.3 5.6V20.6" fill="none" stroke="#000" stroke-width="1.1"/><path d="M7.5 3.8v3.6M30.8 3.8v3.6M7.5 18.8v3.6M30.8 18.8v3.6" stroke="#d02858" stroke-width="1.3"/><text x="5.55" y="32.600" font-family="'Liberation Sans',sans-serif" font-size="9.400" stroke="#000" stroke-width="0.450" fill="#000" textLength="26.9" lengthAdjust="spacingAndGlyphs">Mlang8</text></svg></div><div class="pb" style="left:45px;top:476px"><svg width="38" height="38" viewBox="0 0 38 38"><path d="M8.6 14.5H12.8" stroke="#301828" stroke-width="1.1"/><path d="M8.9 12.7V16.3" stroke="#d02858" stroke-width="1.3"/><rect x="12.8" y="10.7" width="8.9" height="7.4" fill="#f2f278" stroke="#000" stroke-width="1.2"/><path d="M21.700 14.500H23.900M23.900 12V17M26.400 10.300V18.700M29 12V17M31.400 13.500V15.500" fill="none" stroke="#000" stroke-width="1.2"/><text x="8.9" y="32.600" font-family="'Liberation Sans',sans-serif" font-size="9.400" stroke="#000" stroke-width="0.450" fill="#000" textLength="21.2" lengthAdjust="spacingAndGlyphs">MLEF</text></svg></div><div class="pb c0" style="left:5px;top:514px"><svg width="38" height="38" viewBox="0 0 38 38"><path d="M7.5 13.3H12.4" stroke="#301828" stroke-width="1.1"/><path d="M7.8 11.5V15.1" stroke="#d02858" stroke-width="1.3"/><path d="M25.5 13.3H30.8" stroke="#301828" stroke-width="1.1"/><path d="M30.5 11.5V15.1" stroke="#d02858" stroke-width="1.3"/><rect x="12.4" y="9.3" width="13.1" height="8" fill="#f2f278" stroke="#000" stroke-width="1.2"/><text x="8.6" y="32.600" font-family="'Liberation Sans',sans-serif" font-size="9.400" stroke="#000" stroke-width="0.450" fill="#000" textLength="20.8" lengthAdjust="spacingAndGlyphs">MLIN</text></svg></div><div class="pb" style="left:45px;top:514px"><svg width="38" height="38" viewBox="0 0 38 38"><path d="M8.6 13.3H13.3" stroke="#301828" stroke-width="1.1"/><path d="M8.9 11.5V15.1" stroke="#d02858" stroke-width="1.3"/><rect x="13.3" y="9.3" width="13.4" height="8" fill="#f2f278" stroke="#000" stroke-width="1.2"/><text x="7.75" y="32.600" font-family="'Liberation Sans',sans-serif" font-size="9.400" stroke="#000" stroke-width="0.450" fill="#000" textLength="23.5" lengthAdjust="spacingAndGlyphs">MLOC</text></svg></div><div class="pb c0" style="left:5px;top:552px"><svg width="38" height="38" viewBox="0 0 38 38"><path d="M7.5 13.6H12.4" stroke="#301828" stroke-width="1.1"/><path d="M7.8 11.8V15.4" stroke="#d02858" stroke-width="1.3"/><rect x="12.4" y="9.4" width="11.2" height="8.2" fill="#f2f278" stroke="#000" stroke-width="1.2"/><path d="M23.600 13.600H26M26 8.900V18M28.600 11V16M30.400 12.500V14.500" fill="none" stroke="#000" stroke-width="1.2"/><text x="7.7" y="32.600" font-family="'Liberation Sans',sans-serif" font-size="9.400" stroke="#000" stroke-width="0.450" fill="#000" textLength="22.6" lengthAdjust="spacingAndGlyphs">MLSC</text></svg></div><div class="pb" style="left:45px;top:552px"><svg width="38" height="38" viewBox="0 0 38 38"><path d="M8.6 13.2H9.1l2 1.2V21.4H27.9V7.2H13.6V18.9H25.4V9.7H16.1V16.4H21.9M21.9 13.2H31.6" fill="none" stroke="#000" stroke-width="1.2"/><path d="M8.9 11.399999999999999v3.6M31.3 11.399999999999999v3.6" stroke="#d02858" stroke-width="1.3"/><text x="9.5" y="32.600" font-family="'Liberation Sans',sans-serif" font-size="9.400" stroke="#000" stroke-width="0.450" fill="#000" textLength="20" lengthAdjust="spacingAndGlyphs">Mrind</text></svg></div><div class="pb c0" style="left:5px;top:590px"><svg width="38" height="38" viewBox="0 0 38 38"><path d="M7.5 12.2H8.2l2 1.2V20.3H27.2V6H12.7V17.8H24.7V8.5H15.2V15.3H21.2M21.2 12.2H30.8" fill="none" stroke="#000" stroke-width="1.2"/><path d="M7.8 10.399999999999999v3.6M30.5 10.399999999999999v3.6" stroke="#d02858" stroke-width="1.3"/><text x="5.85" y="32.600" font-family="'Liberation Sans',sans-serif" font-size="9.400" stroke="#000" stroke-width="0.450" fill="#000" textLength="26.3" lengthAdjust="spacingAndGlyphs">rindela</text></svg></div><div class="pb" style="left:45px;top:590px"><svg width="38" height="38" viewBox="0 0 38 38"><path d="M8.6 12.2H9.1l2 1.2V20.3H27.9V6H13.6V17.8H25.4V8.5H16.1V15.3H21.9M21.9 12.2H31.6" fill="none" stroke="#000" stroke-width="1.2"/><path d="M8.9 10.399999999999999v3.6M31.3 10.399999999999999v3.6" stroke="#d02858" stroke-width="1.3"/><text x="6" y="32.600" font-family="'Liberation Sans',sans-serif" font-size="9.400" stroke="#000" stroke-width="0.450" fill="#000" textLength="27" lengthAdjust="spacingAndGlyphs">rindnbr</text></svg></div><div class="pb c0" style="left:5px;top:628px"><svg width="38" height="38" viewBox="0 0 38 38"><path d="M7.5 12.2H8.2l2 1.2V20.3H27.2V6.1H12.7V17.8H24.7V8.6H15.2V15.3H21.2M21.2 12.2H30.8" fill="none" stroke="#000" stroke-width="1.2"/><path d="M7.8 10.399999999999999v3.6M30.5 10.399999999999999v3.6" stroke="#d02858" stroke-width="1.3"/><text x="4.9" y="32.600" font-family="'Liberation Sans',sans-serif" font-size="9.400" stroke="#000" stroke-width="0.450" fill="#000" textLength="28.2" lengthAdjust="spacingAndGlyphs">rindwbr</text></svg></div><div class="pb" style="left:45px;top:628px"><svg width="38" height="38" viewBox="0 0 38 38"><path d="M8.6 11.2H9.1l2 1.2V20.3H27.9V6.1H13.6V17.8H25.4V8.6H16.1V15.3H21.9M21.9 11.2H31.6" fill="none" stroke="#000" stroke-width="1.2"/><path d="M8.9 9.399999999999999v3.6M31.3 9.399999999999999v3.6" stroke="#d02858" stroke-width="1.3"/><text x="5.85" y="32.600" font-family="'Liberation Sans',sans-serif" font-size="9.400" stroke="#000" stroke-width="0.450" fill="#000" textLength="27.3" lengthAdjust="spacingAndGlyphs">rindelm</text></svg></div>
<div class="abs" style="left:87px;top:134px;width:17px;height:532px;background:#dbe8fb"></div><div class="btn" style="left:87px;top:134px;width:17px;height:17px;background:#d6e5fa"><svg width="14" height="14"><path d="M3.5 9.5h8l-4-4z" fill="#000"/></svg></div><div class="btn" style="left:87px;top:151px;width:17px;height:16px;background:#d6e5fa"></div><div class="btn" style="left:87px;top:649px;width:17px;height:17px;background:#d6e5fa"><svg width="14" height="14"><path d="M3.5 5.5h8l-4 4z" fill="#000"/></svg></div><div class="abs" style="left:87px;top:674px;width:19px;height:1px;background:#000"></div>
<svg class="abs" style="left:106px;top:125px" width="899" height="576" font-family="'DejaVu Sans Light','DejaVu Sans','Liberation Sans',sans-serif" fill="#33e52b" shape-rendering="crispEdges"><defs><pattern id="hx" width="2" height="2" patternUnits="userSpaceOnUse"><rect width="2" height="2" fill="#280806"/><rect width="1" height="1" fill="#cf8070"/><rect x="1" y="1" width="1" height="1" fill="#cf8070"/></pattern></defs><rect width="899" height="576" fill="#000"/><rect x="242" y="162" width="429" height="343" fill="url(#hx)"/><rect x="321" y="94" width="213" height="68" fill="url(#hx)"/><rect x="342" y="116" width="103" height="46" fill="#000"/><rect x="468" y="116" width="44" height="12" fill="#000"/><rect x="468" y="116" width="16" height="46" fill="#000"/><rect x="468" y="150" width="66" height="12" fill="#000"/><rect x="425.5" y="162" width="3.5" height="343" fill="#000" shape-rendering="auto"/><rect x="484" y="162" width="4" height="343" fill="#000"/><path d="M320.5 56L320.5 94" stroke="#33e52b" stroke-width="1"/><path d="M534.5 56L534.5 94" stroke="#33e52b" stroke-width="1"/><path d="M321 68.5L534 68.5" stroke="#33e52b" stroke-width="1"/><path d="M323.0 68.5L325.9 67.9L333.8 66.6L341.7 65.0L347.0 65.5L347.0 71.5L341.7 72.0L333.8 70.4L325.9 69.1Z" fill="#33e52b" opacity="0.75" shape-rendering="auto"/><path d="M532.0 68.5L529.1 69.1L521.2 70.4L513.3 72.0L508.0 71.5L508.0 65.5L513.3 65.0L521.2 66.6L529.1 67.9Z" fill="#33e52b" opacity="0.75" shape-rendering="auto"/><text transform="translate(341,50.5) scale(1.14,1)" font-size="24.5"><tspan x="0.00 17.54 38.60 52.63 70.18 87.72" y="0">25.000</tspan> <tspan x="119.30" y="0" textLength="34.21" lengthAdjust="spacingAndGlyphs">mm</tspan></text><path d="M399.5 44L399.5 94" stroke="#33e52b" stroke-width="1"/><path d="M373 94.5L412 94.5" stroke="#33e52b" stroke-width="1"/><path d="M373 116.5L412 116.5" stroke="#33e52b" stroke-width="1"/><path d="M399.5 116L399.5 168" stroke="#33e52b" stroke-width="1"/><path d="M399.5 93.0L398.9 90.1L397.6 82.2L396.0 74.3L396.5 69.0L402.5 69.0L403.0 74.3L401.4 82.2L400.1 90.1Z" fill="#33e52b" opacity="0.75" shape-rendering="auto"/><path d="M399.5 118.0L400.1 120.9L401.4 128.8L403.0 136.7L402.5 142.0L396.5 142.0L396.0 136.7L397.6 128.8L398.9 120.9Z" fill="#33e52b" opacity="0.75" shape-rendering="auto"/><text transform="translate(413.5,79) rotate(90) scale(1.14,1)" font-size="8"><tspan x="0.00 6.63 11.05 16.58 22.11" y="0">2.000</tspan> <tspan x="32.05" y="0" textLength="10.18" lengthAdjust="spacingAndGlyphs">mm</tspan></text><path d="M229 94.5L268 94.5" stroke="#33e52b" stroke-width="1"/><path d="M229 163.5L281 163.5" stroke="#33e52b" stroke-width="1"/><path d="M255.5 94L255.5 163" stroke="#33e52b" stroke-width="1"/><path d="M255.5 96.0L256.1 98.9L257.4 106.8L259.0 114.7L258.5 120.0L252.5 120.0L252.0 114.7L253.6 106.8L254.9 98.9Z" fill="#33e52b" opacity="0.75" shape-rendering="auto"/><path d="M255.5 161.0L254.9 158.1L253.6 150.2L252.0 142.3L252.5 137.0L258.5 137.0L259.0 142.3L257.4 150.2L256.1 158.1Z" fill="#33e52b" opacity="0.75" shape-rendering="auto"/><text transform="translate(274,51) rotate(90) scale(1.14,1)" font-size="24.5"><tspan x="0.00 21.05 35.09 52.63 70.18" y="0">8.000</tspan> <tspan x="101.75" y="0" textLength="34.21" lengthAdjust="spacingAndGlyphs">mm</tspan></text><path d="M572 94.5L611 94.5" stroke="#33e52b" stroke-width="1"/><path d="M572 150.5L611 150.5" stroke="#33e52b" stroke-width="1"/><path d="M598.5 94L598.5 150" stroke="#33e52b" stroke-width="1"/><path d="M598.5 96.0L599.1 98.9L600.4 106.8L602.0 114.7L601.5 120.0L595.5 120.0L595.0 114.7L596.6 106.8L597.9 98.9Z" fill="#33e52b" opacity="0.75" shape-rendering="auto"/><path d="M598.5 148.0L597.9 145.1L596.6 137.2L595.0 129.3L595.5 124.0L601.5 124.0L602.0 129.3L600.4 137.2L599.1 145.1Z" fill="#33e52b" opacity="0.75" shape-rendering="auto"/><text transform="translate(616,46) rotate(90) scale(1.14,1)" font-size="24.5"><tspan x="0.00 21.05 35.09 52.63 70.18" y="0">6.600</tspan> <tspan x="101.75" y="0" textLength="34.21" lengthAdjust="spacingAndGlyphs">mm</tspan></text><path d="M482.5 145L482.5 215" stroke="#33e52b" stroke-width="1"/><path d="M534.5 145L534.5 213" stroke="#33e52b" stroke-width="1"/><path d="M483 157.5L534 157.5" stroke="#33e52b" stroke-width="1"/><path d="M490 157.5L500 154.5L509 153.5L519 154.5L529 157.5L519 160.5L509 161.5L500 160.5Z" fill="#33e52b"/><text transform="translate(430.5,139) scale(1.14,1)" font-size="24.5"><tspan x="0.00 21.05 35.09 52.63 70.18" y="0">6.000</tspan> <tspan x="102.63" y="0" textLength="34.21" lengthAdjust="spacingAndGlyphs">mm</tspan></text><path d="M433 292.5L484 292.5" stroke="#33e52b" stroke-width="1" opacity="0.8"/><path d="M488 292.5L539 292.5" stroke="#33e52b" stroke-width="1" opacity="0.8"/><path d="M484.5 279L484.5 317" stroke="#33e52b" stroke-width="1"/><path d="M488.5 279L488.5 317" stroke="#33e52b" stroke-width="1"/><path d="M483.0 292.5L480.0 293.1L471.8 294.4L463.5 296.0L458.0 295.5L458.0 289.5L463.5 289.0L471.8 290.6L480.0 291.9Z" fill="#33e52b" opacity="1" shape-rendering="auto"/><path d="M490.0 292.5L493.0 291.9L501.2 290.6L509.5 289.0L515.0 289.5L515.0 295.5L509.5 296.0L501.2 294.4L493.0 293.1Z" fill="#33e52b" opacity="1" shape-rendering="auto"/><text transform="translate(408,273.5) scale(1.14,1)" font-size="24.5" opacity="0.8"><tspan x="0.00 21.05 35.09 52.63 70.18" y="0">0.500</tspan> <tspan x="101.75" y="0" textLength="34.21" lengthAdjust="spacingAndGlyphs">mm</tspan></text><path d="M268.5 163L268.5 505" stroke="#33e52b" stroke-width="1" opacity="0.85"/><path d="M268.5 164.0L269.0 166.9L270.1 174.8L271.5 182.7L271.1 188.0L265.9 188.0L265.5 182.7L266.9 174.8L268.0 166.9Z" fill="#33e52b" opacity="1" shape-rendering="auto"/><text transform="translate(287,246) rotate(90) scale(1.14,1)" font-size="24.5" opacity="0.8"><tspan x="0.00 17.54 38.60 52.63 70.18 87.72" y="0">40.000</tspan> <tspan x="119.30" y="0" textLength="34.21" lengthAdjust="spacingAndGlyphs">mm</tspan></text><path d="M242.5 467L242.5 506" stroke="#33e52b" stroke-width="1"/><path d="M671.5 467L671.5 506" stroke="#33e52b" stroke-width="1"/><path d="M242 505.5L280 505.5" stroke="#33e52b" stroke-width="1"/><path d="M243 479.5L671 479.5" stroke="#33e52b" stroke-width="1" opacity="0.85"/><path d="M244.0 479.5L247.1 478.9L255.7 477.6L264.3 476.0L270.0 476.5L270.0 482.5L264.3 483.0L255.7 481.4L247.1 480.1Z" fill="#33e52b" opacity="1" shape-rendering="auto"/><path d="M670.0 479.5L666.9 480.1L658.3 481.4L649.7 483.0L644.0 482.5L644.0 476.5L649.7 476.0L658.3 477.6L666.9 478.9Z" fill="#33e52b" opacity="1" shape-rendering="auto"/><path d="M268.5 504.0L267.9 500.9L266.6 492.3L265.0 483.7L265.5 478.0L271.5 478.0L272.0 483.7L270.4 492.3L269.1 500.9Z" fill="#33e52b" opacity="1" shape-rendering="auto"/><text transform="translate(371,461.5) scale(1.14,1)" font-size="24.5" opacity="0.8"><tspan x="0.00 17.54 38.60 52.63 70.18 87.72" y="0">50.000</tspan> <tspan x="119.30" y="0" textLength="34.21" lengthAdjust="spacingAndGlyphs">mm</tspan></text><path d="M333.5 506L333.5 547" stroke="#e07a78" stroke-width="1"/><path d="M324.5 516L333.5 507L344.5 516" fill="none" stroke="#c8706c" stroke-width="1" shape-rendering="auto"/><rect x="330" y="502" width="6" height="6" fill="#5b9cf0"/><rect x="331.5" y="524" width="4" height="4" fill="#000" stroke="#fff" stroke-width="1"/><path d="M456.5 506L456.5 547" stroke="#e07a78" stroke-width="1"/><path d="M447.5 516L456.5 507L467.5 516" fill="none" stroke="#c8706c" stroke-width="1" shape-rendering="auto"/><rect x="453" y="502" width="6" height="6" fill="#5b9cf0"/><rect x="454.5" y="524" width="4" height="4" fill="#000" stroke="#fff" stroke-width="1"/><path d="M579.5 506L579.5 547" stroke="#e07a78" stroke-width="1"/><path d="M570.5 516L579.5 507L590.5 516" fill="none" stroke="#c8706c" stroke-width="1" shape-rendering="auto"/><rect x="576" y="502" width="6" height="6" fill="#5b9cf0"/><rect x="577.5" y="524" width="4" height="4" fill="#000" stroke="#fff" stroke-width="1"/></svg>
<div class="abs" style="left:106px;top:125px;width:916px;height:1px;background:#000"></div><div class="abs" style="left:1005px;top:126px;width:17px;height:575px;background:linear-gradient(90deg,#c9d7ef,#e8eefa 8px,#fff 16px)"></div><div class="abs" style="left:1022px;top:125px;width:2px;height:613px;background:#dbe8fa"></div><div class="abs" style="left:106px;top:701px;width:899px;height:17px;background:linear-gradient(#fff,#e8eefa 8px,#c9d7ef 17px)"></div><div class="abs" style="left:1005px;top:701px;width:17px;height:17px;background:#e3ecfa"></div><svg class="abs" style="left:0;top:0" width="1024" height="768"><path d="M1008.5 137.5l5.5-6 5.5 6z M1008.5 689.5l5.500 6 5.5-6z M119.500 706.500l-6 6.500 6 6.500z M996.500 703.500l6 6.500 -6 6.500z" fill="#fff" stroke="#9aa4b8" stroke-width="1"/><path d="M1006.500 405.500h10q4 0 4 4v8q0 4 -4 4h-10z" fill="#fff" stroke="#8d9bbb"/><path d="M1010 411.500h7M1010 414.500h7" stroke="#9fb0d0"/><path d="M549.500 703.500v10q0 3 3 3h8q3 0 3 -3v-10z" fill="#fff" stroke="#8d9bbb"/><path d="M554.500 707v6M557.500 707v6" stroke="#9fb0d0"/><path d="M106 718.500h916" stroke="#000"/></svg>
<div class="abs" style="left:2px;top:719px;width:1020px;height:19px;background:#d4e4fa"></div><div class="abs" style="left:2px;top:675px;width:104px;height:60px;background:#d4e4fa;border-bottom:1px solid #7ea6e0"></div><div class="sf" style="left:106px;width:356px;color:#000">Select: Enter the starting point</div><div class="sf" style="left:463px;width:112px;color:#000"><span style="display:inline-block;transform:scaleX(0.94);transform-origin:0 0">0 items</span></div><div class="sf" style="left:576px;width:62px;color:#e0452f"><span style="display:inline-block;transform:scaleX(0.97);transform-origin:0 0">cond</span></div><div class="sf" style="left:640px;width:118px;color:#000">-10.5475, 12.4919</div><div class="sf" style="left:760px;width:118px;color:#000">-59.1657, 32.6464</div><div class="sf" style="left:880px;width:27px;color:#000"><span style="display:inline-block;transform:scaleX(0.86);transform-origin:0 0">mm</span></div><div class="sf" style="left:909px;width:35px;color:#000"><span style="display:inline-block;transform:scaleX(0.93);transform-origin:0 0">A/RF</span></div><div class="sf" style="left:945px;width:77px;color:#000"><span style="display:inline-block;transform:scaleX(0.87);transform-origin:0 0">SimSchem</span></div>
<div class="abs" style="left:0;top:736px;width:1024px;height:2px;background:#5b88d6"></div><div id="task" class="abs"><svg class="abs" style="left:0;top:0" width="1024" height="30" font-family="'Liberation Sans',sans-serif"><rect x="0" y="0" width="1024" height="1" fill="#86a8e0"/><path d="M0 1h11.500l-2.500 10.500q-4.500-1.500-9 0z" fill="#a8d6f6"/><path d="M13 1h18.500l-3 14.500q-7 2.500-17-3z" fill="#b4dcf8"/><path d="M0 13q4.500-1.500 8.500 0l-3 17h-5.500z" fill="#8ec6f0"/><path d="M10.500 14q9 5 17 3l-2.800 13h-17.500z" fill="#9ccef4"/><text x="39.500" y="21" font-size="18" font-weight="bold" font-style="italic" fill="#fff" textLength="38.500" lengthAdjust="spacingAndGlyphs">start</text><path d="M102 8.500h11l2 2v11h-13z" fill="#fff" stroke="#1c3c80" stroke-width="1.200"/><circle cx="108" cy="15.500" r="3.600" fill="none" stroke="#2a68d0" stroke-width="1.800"/><path d="M104.500 15.500h7" stroke="#2a68d0" stroke-width="1.300"/><path d="M112 11.500l3.500-1.500" stroke="#e03020" stroke-width="1.500"/><path d="M127 8h9l-0.500 9h-8z" fill="#b8dcfa" stroke="#88b8ec" stroke-width="1"/><path d="M128.500 19.500h6l1 2h-8z" fill="#e8f2fc"/><rect x="130.500" y="17" width="2" height="2.500" fill="#d8e8f8"/><circle cx="154" cy="14.500" r="8" fill="#e8801c"/><circle cx="154.500" cy="13.500" r="4.800" fill="#3a64c4"/><path d="M146.500 12q3 6 9 5.500 3-0.500 5-3.500-0.500 8-7 8.500-6-0.500-7-6z" fill="#f0a030"/><path d="M147 10q2-4 6-3.500-3 1.500-2.500 4z" fill="#c85810"/><circle cx="177" cy="14.500" r="8" fill="#c8ccd4"/><path d="M177 6.500a8 8 0 0 1 8 8h-8z" fill="#58b050"/><path d="M169 14.500a8 8 0 0 0 8 8v-8z" fill="#e88830"/><circle cx="177" cy="14.500" r="5.500" fill="#2858c0"/><path d="M175 11.500l5 3-5 3z" fill="#fff"/><circle cx="200" cy="15" r="7.800" fill="#e23424"/><path d="M194 13q6-4 12-1M194.500 17.500q6 3 11.500-0.500" fill="none" stroke="#fff" stroke-width="1.500"/><circle cx="204" cy="9.500" r="2.600" fill="#e8ecf4" stroke="#a8b0c0" stroke-width="0.600"/><path d="M227 9.500q-7-1.500-7 3 0 2.500 4 3 3 0.500 2.500 3-1 2.500-6.500 1.500" fill="none" stroke="#f0a020" stroke-width="3.600"/><path d="M226 8l5-1.500-1 5z" fill="#3868c8"/><rect x="217.500" y="17.500" width="3.500" height="3.500" fill="#2850b0"/><rect x="238.800" y="7" width="15" height="15.500" fill="#fff" stroke="#d82030" stroke-width="1.500"/><path d="M242.500 9h9" stroke="#30a040" stroke-width="1.800"/><text x="246.300" y="20.500" text-anchor="middle" font-size="10.500" font-weight="bold" fill="#404048" textLength="12" lengthAdjust="spacingAndGlyphs">EM</text><path d="M268.500 8l3 2.800-3 2.800M272.500 8l3 2.800-3 2.800" fill="none" stroke="#fff" stroke-width="1.500"/><rect x="284" y="3.500" width="49.500" height="20" rx="2.500" fill="#4c6ebc"/><rect x="284" y="3.500" width="49.500" height="20" rx="2.500" fill="none" stroke="#4464b0" stroke-width="1"/><g transform="translate(294,7.5) scale(0.95)"><path d="M0.800 0.500V6M2.800 0.500h2.400v3.500h-2.400zM6.800 0.500h2.400v3.500h-2.400zM10.800 0.500l1.800 3.500 2.600-4" fill="none" stroke="#0b7c18" stroke-width="1.900"/><rect x="3" y="4.500" width="11.500" height="10.500" fill="#000" stroke="#8a9098" stroke-width="1"/><path d="M5 7h4.500M7 9.300h5M8 11.300h4.500M6.500 13.200h5.500" stroke="#f4e04a" stroke-width="1.300"/></g><text x="313.500" y="19" font-size="11" fill="#fff">[.</text><rect x="345.2" y="7.900" width="15" height="14" fill="#6fe0e0" stroke="#000" stroke-width="1.200"/><path d="M346.7 15.500h2.500l1-1.500 1 2.500 1.200-3 1.200 3 1.300-4 1.200 3.500 1-1h2" fill="none" stroke="#101820" stroke-width="0.900"/><text x="364.7" y="18.300" font-size="10.500" fill="#fff">M</text><rect x="397.2" y="7.900" width="15" height="14" fill="#6fe0e0" stroke="#000" stroke-width="1.200"/><path d="M398.7 15.500h2.500l1-1.500 1 2.500 1.200-3 1.200 3 1.300-4 1.200 3.500 1-1h2" fill="none" stroke="#101820" stroke-width="0.900"/><text x="416.7" y="18.300" font-size="10.500" fill="#fff">M</text><rect x="449.2" y="7.900" width="15" height="14" fill="#6fe0e0" stroke="#000" stroke-width="1.200"/><path d="M450.7 15.500h2.500l1-1.500 1 2.500 1.200-3 1.200 3 1.300-4 1.200 3.500 1-1h2" fill="none" stroke="#101820" stroke-width="0.900"/><text x="468.7" y="18.300" font-size="10.500" fill="#fff">M</text><rect x="501.2" y="7.900" width="15" height="14" fill="#6fe0e0" stroke="#000" stroke-width="1.200"/><path d="M502.7 15.500h2.500l1-1.500 1 2.500 1.200-3 1.200 3 1.300-4 1.200 3.500 1-1h2" fill="none" stroke="#101820" stroke-width="0.900"/><text x="520.7" y="18.300" font-size="10.500" fill="#fff">M</text><path d="M556 13.500h9.500l-1.500 8q-3.200 1.500-6.500 0z" fill="#e8c040" stroke="#58406c" stroke-width="1"/><path d="M556.500 8l2 6M560.500 7v7M564.500 8l-1.500 6M567 9.500l-3 5" stroke="#f0f0f0" stroke-width="1.500"/><path d="M555.500 7.500l1.500 3" stroke="#e04020" stroke-width="2"/><path d="M560.500 6.500v3" stroke="#30a040" stroke-width="2"/><path d="M565 7l-1 3" stroke="#e8a020" stroke-width="2"/><path d="M558 16.500q2.500 2 5.500 0" stroke="#d04030" stroke-width="1.500" fill="none"/><path d="M558.500 19.500h4.500" stroke="#40a050" stroke-width="1.300"/><text x="572.700" y="18.300" font-size="10.500" fill="#fff">u.</text><path d="M605.800 7V12M607.800 7h2.400v3h-2.400zM611.800 7h2.400v3h-2.400zM615.800 7l1.800 3 2.600-3.500" fill="none" stroke="#0f8a1c" stroke-width="1.500"/><rect x="607.500" y="12.500" width="12" height="9.500" fill="#c8ccd0" stroke="#4a5a78" stroke-width="1"/><rect x="609.500" y="14.500" width="4" height="2.500" fill="#fff"/><rect x="609.500" y="18" width="4" height="2.500" fill="#fff"/><rect x="615" y="15" width="3" height="5" fill="#404850"/><text x="625" y="18.300" font-size="10.500" fill="#fff">L.</text><rect x="883.500" y="0" width="16.500" height="30" fill="#e4ecf9"/><rect x="883.500" y="0" width="5" height="30" fill="#d2def2"/><path d="M886 10.200l5.800-7.200 5.800 7.200zM886 18.800l5.800 6.600 5.800-6.600z" fill="#fff" stroke="#a4acbc" stroke-width="1"/><rect x="900" y="0" width="124" height="30" fill="#6a90d4" opacity="0.350"/><path d="M914.500 0V30" stroke="#8eb2e4" stroke-width="1.200"/><path d="M908 15l8-8h3v16h-3z" fill="#a4d4ee" stroke="#7cb4dc" stroke-width="0.800"/><rect x="924.500" y="8.200" width="7.200" height="6.800" fill="#f2d200"/><rect x="931.700" y="8.200" width="7.200" height="6.800" fill="#000"/><rect x="924.500" y="15" width="7.200" height="6.800" fill="#1c8a24"/><rect x="931.700" y="15" width="7.200" height="6.800" fill="#e81414"/><rect x="946.500" y="7.500" width="9" height="8" fill="#56669c" stroke="#c4cce0" stroke-width="0.800"/><rect x="942.500" y="12" width="9" height="8" fill="#46507c" stroke="#c4cce0" stroke-width="0.800"/><path d="M944 22h6M949 17.500h5.500" stroke="#e0e4f0" stroke-width="1.300"/><rect x="960.500" y="7" width="15.500" height="15.500" fill="#1434c4" stroke="#fff" stroke-width="1.200"/><path d="M968.200 9l6.300 11.500h-12.600z" fill="#f4e820" stroke="#000" stroke-width="0.700"/><path d="M968.200 12.500v4.500M968.200 18.200v1.500" stroke="#000" stroke-width="1.600"/><text x="983.500" y="19" font-size="11" fill="#fff">16:04</text></svg></div>
</div>
</body></html>
